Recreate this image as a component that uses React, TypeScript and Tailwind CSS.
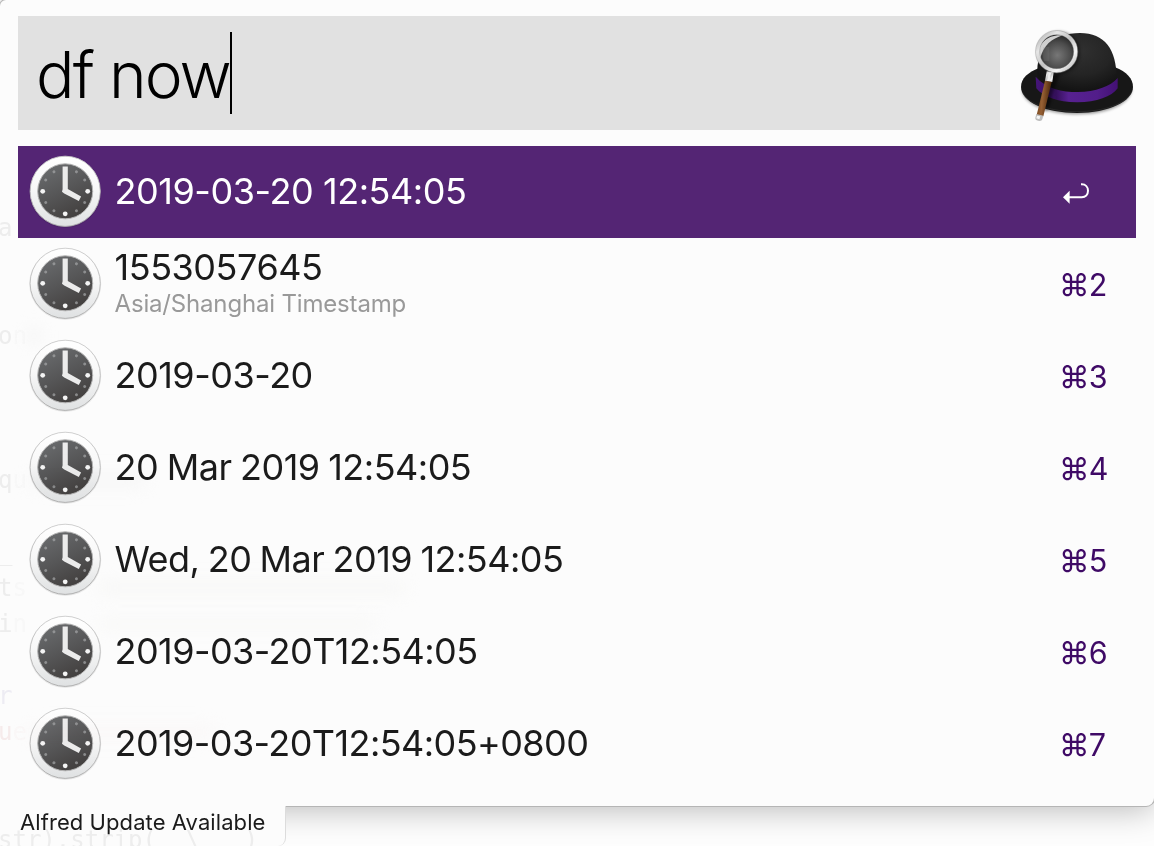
import React from "react";

type Result = { title: string; subtitle?: string; tracking: string };

const results: Result[] = [
  { title: "2019-03-20 12:54:05", tracking: "tracking-[-0.44px]" },
  { title: "1553057645", subtitle: "Asia/Shanghai Timestamp", tracking: "tracking-[-0.45px]" },
  { title: "2019-03-20", tracking: "tracking-[-0.48px]" },
  { title: "20 Mar 2019 12:54:05", tracking: "tracking-[-0.5px] [word-spacing:-1.1px]" },
  { title: "Wed, 20 Mar 2019 12:54:05", tracking: "tracking-[-0.53px] [word-spacing:-1.3px]" },
  { title: "2019-03-20T12:54:05", tracking: "tracking-[-0.55px]" },
  { title: "2019-03-20T12:54:05+0800", tracking: "tracking-[-0.58px]" },
];

function ClockIcon() {
  const minor = [30, 60, 120, 150, 210, 240, 300, 330];
  return (
    <svg width="76" height="76" viewBox="-0.2 0.7 76 76" className="shrink-0">
      <defs>
        <linearGradient id="rim" x1="0" y1="0" x2="0" y2="1">
          <stop offset="0" stopColor="#ffffff" />
          <stop offset="0.45" stopColor="#f8f8f8" />
          <stop offset="1" stopColor="#dfe1e2" />
        </linearGradient>
        <linearGradient id="edge" x1="0" y1="0" x2="0" y2="1">
          <stop offset="0" stopColor="#cccccc" />
          <stop offset="1" stopColor="#a9a9a9" />
        </linearGradient>
        <linearGradient id="face" x1="0.2" y1="0" x2="0.7" y2="1">
          <stop offset="0" stopColor="#6a6c6e" />
          <stop offset="0.5" stopColor="#565657" />
          <stop offset="1" stopColor="#413e3d" />
        </linearGradient>
      </defs>
      <circle cx="38" cy="38.6" r="36" fill="#000000" opacity="0.08" />
      <circle cx="38" cy="38" r="35.1" fill="url(#rim)" stroke="url(#edge)" strokeWidth="0.9" />
      <circle cx="38" cy="38" r="27.5" fill="url(#face)" stroke="#b5b5b5" strokeWidth="1" />
      {minor.map((a) => (
        <circle key={a} cx="38" cy="15.5" r="1.5" fill="#a5a7a8" opacity="0.7" transform={`rotate(${a} 38 38)`} />
      ))}
      <circle cx="15.5" cy="38" r="2.4" fill="#f4f4f4" />
      <circle cx="60.5" cy="38" r="2.4" fill="#f4f4f4" />
      <circle cx="38" cy="60.5" r="2.4" fill="#f4f4f4" />
      <path d="M35.4 13.2H40.6V35.6L53.9 43.2L51.6 47.6L37 40.2L34.8 38.4L35.4 36Z" fill="#ececec" />
    </svg>
  );
}

function HatIcon() {
  return (
    <svg width="154" height="114" viewBox="0 18 462 342" className="shrink-0">
      <defs>
        <radialGradient id="crown" cx="0.55" cy="0.3" r="0.65">
          <stop offset="0" stopColor="#303030" />
          <stop offset="0.6" stopColor="#242424" />
          <stop offset="1" stopColor="#141414" />
        </radialGradient>
        <linearGradient id="band" x1="0" y1="0" x2="1" y2="0">
          <stop offset="0" stopColor="#46157a" />
          <stop offset="0.25" stopColor="#35105c" />
          <stop offset="0.4" stopColor="#572190" />
          <stop offset="0.75" stopColor="#521d8a" />
          <stop offset="1" stopColor="#431074" />
        </linearGradient>
        <linearGradient id="metal" x1="0" y1="0" x2="1" y2="1">
          <stop offset="0" stopColor="#a8a8a8" />
          <stop offset="0.25" stopColor="#e6e6e6" />
          <stop offset="0.5" stopColor="#c2c2c2" />
          <stop offset="0.75" stopColor="#f4f4f4" />
          <stop offset="1" stopColor="#aaaaaa" />
        </linearGradient>
        <radialGradient id="lens" cx="0.52" cy="0.6" r="0.55">
          <stop offset="0" stopColor="#777777" />
          <stop offset="0.65" stopColor="#4b4b4b" />
          <stop offset="1" stopColor="#292929" />
        </radialGradient>
        <linearGradient id="wood" x1="0" y1="0" x2="1" y2="0.2">
          <stop offset="0" stopColor="#6b3d14" />
          <stop offset="0.45" stopColor="#966034" />
          <stop offset="1" stopColor="#482408" />
        </linearGradient>
        <filter id="soft" x="-20%" y="-20%" width="140%" height="140%">
          <feGaussianBlur stdDeviation="4" />
        </filter>
      </defs>
      <path d="M66 240C70 282 140 313 233 313C326 313 392 280 396 238Z" fill="#000000" opacity="0.4" filter="url(#soft)" />
      <path d="M63 231C63 205 84 187 117 174L345 172C380 186 399 206 399 231C399 274 326 309 231 309C136 309 63 275 63 231Z" fill="#171717" />
      <path d="M67 246C82 282 152 305 231 305C310 305 379 282 396 244" fill="none" stroke="#4b4b4b" strokeWidth="2" opacity="0.5" />
      <path d="M112 180C114 112 160 69 240 69C314 69 350 118 350 205C350 222 330 248 232 250C145 252 107 222 112 180Z" fill="url(#crown)" />
      <path d="M107 200C140 237 185 246 234 246C286 246 332 229 353 204L353 235C335 260 290 277 232 277C172 277 128 259 109 235Z" fill="url(#band)" />
      <path d="M180 190L158 248C153 275 146 296 136 306L132 260L150 196Z" fill="#000000" opacity="0.5" filter="url(#soft)" />
      <circle cx="176" cy="128" r="57" fill="none" stroke="#000000" strokeWidth="14" opacity="0.4" filter="url(#soft)" />
      <circle cx="170" cy="125" r="55" fill="url(#lens)" />
      <path d="M117 142C110 100 145 72 188 76C156 86 130 106 121 145Z" fill="#e0e0e0" opacity="0.9" />
      <path d="M130 111H148V153H132C127 138 126 124 130 111Z" fill="#888888" opacity="0.2" />
      <circle cx="170" cy="125" r="57" fill="none" stroke="url(#metal)" strokeWidth="12" />
      <circle cx="170" cy="125" r="63.5" fill="none" stroke="#8e8e8e" strokeWidth="1.2" />
      <circle cx="170" cy="125" r="51" fill="none" stroke="#7a7a7a" strokeWidth="1" />
      <path d="M140 184L161 187L157 216L135 213Z" fill="url(#metal)" />
      <path d="M146 188L153 189L148 214L141 213Z" fill="#f5f5f5" opacity="0.8" />
      <path d="M135 212L155 216L130 319L110 315Z" fill="url(#wood)" />
      <path d="M109 312L130 317L127 328Q125 335 114 332Q105 330 106 323Z" fill="#bdbdbd" />
      <path d="M111 317L121 319L118 328L109 325Z" fill="#f4f4f4" />
    </svg>
  );
}

function ReturnIcon() {
  return (
    <svg width="30" height="24" viewBox="-2 -1 30 24">
      <path d="M20 2.3H20.8C24.5 2.3 27 4.9 27 8.8C27 12.7 24.4 15.2 20.8 15.2H7" fill="none" stroke="#fff" strokeWidth="2" />
      <path d="M2 15.2L8.6 8.7V21.7Z" fill="#fff" />
    </svg>
  );
}

type GhostLine = { text: string; dim?: string; color?: string; smudge?: string };

// Editor lines behind the translucent window, one entry per 36px line.
const ghostLines: GhostLine[] = [
  { text: "a" },
  { text: "" },
  { text: "" },
  { text: "o", dim: "n", smudge: "w-[14px] bg-[#f6f6f6]" },
  { text: "" },
  { text: "" },
  { text: "" },
  { text: "q", dim: "u", smudge: "w-[120px] bg-[#fafafa]" },
  { text: "" },
  { text: "_" },
  { text: "t", dim: "s", smudge: "ml-[70px] w-[310px] bg-[#fbfbfa]" },
  { text: "i", dim: "n", smudge: "ml-[70px] w-[280px] bg-[#fcfcfb]" },
  { text: "" },
  { text: "r", color: "text-[#f0eff6]" },
  { text: "u", dim: "e", color: "text-[#f9eeee]", smudge: "w-[190px] bg-[#fdfbfb]" },
  { text: "" },
  { text: "" },
  { text: "str).strip(  \\   )" },
];

function Backdrop() {
  return (
    <div
      aria-hidden
      className="pointer-events-none absolute inset-0 overflow-hidden pt-[210px] font-['DejaVu_Sans_Mono',monospace] text-[24px] leading-[36px] text-[#f0f0f0] mix-blend-multiply"
    >
      {ghostLines.map((line, i) => (
        <div key={i} className={`-ml-[2px] flex h-[36px] items-center whitespace-pre ${line.color ?? ""}`}>
          {line.text && <span>{line.text}</span>}
          {line.dim && <span className="opacity-30">{line.dim}</span>}
          {line.smudge && <span className={`h-[16px] rounded-full blur-[8px] ${line.smudge}`} />}
        </div>
      ))}
    </div>
  );
}

export default function App() {
  return (
    <div className="relative isolate h-[846px] w-[1154px] overflow-hidden bg-[#fdfdfd] font-['Inter',sans-serif]">
      <main className="h-[806px] rounded-tl-[6px] rounded-br-[8px] bg-[#fcfcfc] pt-4 shadow-[0_0_0_1px_#b5b5b5,0_4px_32px_rgba(0,0,0,0.27)]">
        <header className="flex h-[114px] pl-[18px]">
          <div className="flex w-[982px] items-start bg-[#e1e1e1] pl-[18px] pt-4">
            <span className="whitespace-pre pt-[2px] text-[64px] font-light leading-[82px] tracking-[-1.9px] text-black">df now</span>
            <span className="h-[82px] w-[2px] bg-black" />
          </div>
          <HatIcon />
        </header>
        <ul className="mx-[18px] mt-4">
          {results.map((r, i) => (
            <li
              key={r.title}
              className={`flex h-[92px] items-center gap-[11.5px] pl-[9px] ${i === 0 ? "bg-[#542574] text-white" : "text-[#1b1b1b]"}`}
            >
              <ClockIcon />
              <div className="flex grow flex-col whitespace-nowrap pb-[2px]">
                <span className={`text-[36px] leading-[40px] ${r.tracking}`}>{r.title}</span>
                {r.subtitle && (
                  <span className="pt-px text-[24px] leading-[32px] tracking-[-0.17px] text-[#999999]">{r.subtitle}</span>
                )}
              </div>
              <div className="w-[77px] pt-px">
                {i === 0 ? (
                  <ReturnIcon />
                ) : (
                  <span className="text-[30.5px] leading-[40px] tracking-[-0.8px] text-[#3f0a66]">⌘{i + 1}</span>
                )}
              </div>
            </li>
          ))}
        </ul>
      </main>
      <footer className="relative flex h-[40px] w-[286px] items-start rounded-br-[8px] border-r border-[#dcdcdc] bg-[#fcfcfc] pl-[20px]">
        <span className="whitespace-nowrap text-[22px] leading-[32px] tracking-[0.08px] text-[#1b1b1b]">Alfred Update Available</span>
      </footer>
      <Backdrop />
    </div>
  );
}
